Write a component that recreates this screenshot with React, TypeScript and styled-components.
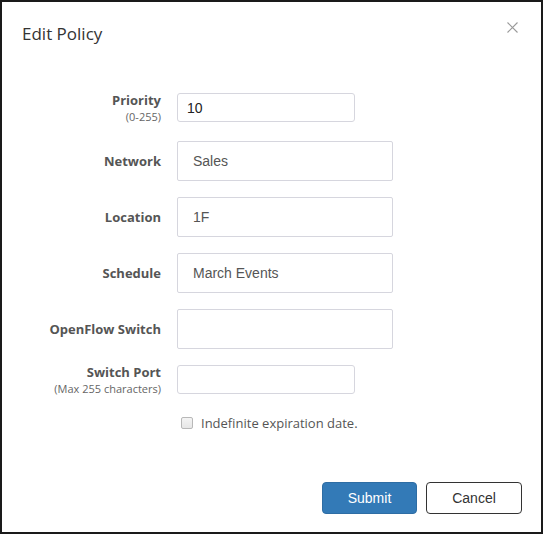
import React from 'react';
import styled, { createGlobalStyle } from 'styled-components';

const GlobalStyle = createGlobalStyle`
  html, body {
    margin: 0;
    padding: 0;
    background: #fff;
  }
  * {
    box-sizing: border-box;
  }
`;

const Dialog = styled.div`
  width: 543px;
  height: 534px;
  border: 2px solid #1a1a1a;
  background: #fff;
  display: flex;
  flex-direction: column;
  font-family: 'Open Sans', 'Liberation Sans', sans-serif;
`;

const Header = styled.header`
  display: flex;
  justify-content: space-between;
  align-items: flex-start;
  padding: 20px 22px 0 20px;
  height: 91px;
`;

const Title = styled.h4`
  margin: 0;
  font-size: 17px;
  font-weight: 400;
  line-height: 24px;
  color: #333;
`;

const CloseButton = styled.button`
  border: 0;
  background: none;
  padding: 0;
  width: 12px;
  height: 12px;
  cursor: pointer;
  display: flex;
`;

const Form = styled.form`
  display: flex;
  flex-direction: column;
  gap: 16px;
  flex: 1;
`;

const Row = styled.div<{ $top?: boolean; $extra?: number }>`
  display: grid;
  grid-template-columns: 159px 1fr;
  column-gap: 16px;
  align-items: ${({ $top }) => ($top ? 'start' : 'center')};
  margin-bottom: ${({ $extra }) => $extra ?? 0}px;
`;

const LabelBlock = styled.label<{ $twoLine?: boolean }>`
  display: flex;
  flex-direction: column;
  align-items: flex-end;
  text-align: right;
  margin-top: ${({ $twoLine }) => ($twoLine ? '-1px' : '0')};
`;

const LabelText = styled.span`
  font-size: 13px;
  font-weight: 700;
  color: #555;
  line-height: 17px;
`;

const Hint = styled.span`
  font-size: 11px;
  color: #666;
  line-height: 15px;
`;

const Input = styled.input<{ $size: 'sm' | 'lg' }>`
  display: block;
  width: ${({ $size }) => ($size === 'sm' ? '178px' : '216px')};
  height: ${({ $size }) => ($size === 'sm' ? '29px' : '40px')};
  padding: 0 ${({ $size }) => ($size === 'sm' ? '9px' : '15px')};
  border: 1px solid #d6d6de;
  border-radius: ${({ $size }) => ($size === 'sm' ? '3px' : '2px')};
  font-family: 'Liberation Sans', Arial, sans-serif;
  font-size: 14px;
  color: ${({ $size }) => ($size === 'sm' ? '#222' : '#555')};
  background: #fff;
  outline: none;
`;

const CheckRow = styled.div`
  display: flex;
  align-items: center;
  gap: 8px;
  margin: 2px 0 0 179px;
`;

const CheckBox = styled.span`
  width: 12px;
  height: 12px;
  border: 1px solid #b8b8b8;
  border-radius: 2px;
  background: linear-gradient(#f4f4f4, #e6e6e6);
`;

const CheckLabel = styled.span`
  font-size: 13px;
  color: #555;
  line-height: 18px;
`;

const Footer = styled.footer`
  display: flex;
  justify-content: flex-end;
  gap: 9px;
  padding: 0 19px 18px 0;
`;

const Button = styled.button<{ $primary?: boolean }>`
  height: 32px;
  width: ${({ $primary }) => ($primary ? '95px' : '96px')};
  border-radius: 4px;
  border: 1px solid ${({ $primary }) => ($primary ? '#2e6da4' : '#333')};
  background: ${({ $primary }) => ($primary ? '#337ab7' : '#fff')};
  color: ${({ $primary }) => ($primary ? '#fff' : '#333')};
  font-family: 'Liberation Sans', Arial, sans-serif;
  font-size: 14px;
  cursor: pointer;
`;

const fields = [
  { label: 'Network', value: 'Sales' },
  { label: 'Location', value: '1F' },
  { label: 'Schedule', value: 'March Events' },
  { label: 'OpenFlow Switch', value: '' },
];

export default function App() {
  return (
    <>
      <GlobalStyle />
      <Dialog>
        <Header>
          <Title>Edit Policy</Title>
          <CloseButton aria-label="Close">
            <svg width="11" height="11" viewBox="0 0 11 11">
              <path d="M0.5 0.5L10.5 10.5M10.5 0.5L0.5 10.5" stroke="#9a9a9a" strokeWidth="1.1" />
            </svg>
          </CloseButton>
        </Header>
        <Form onSubmit={(e) => e.preventDefault()}>
          <Row $top $extra={1}>
            <LabelBlock $twoLine>
              <LabelText>Priority</LabelText>
              <Hint>(0-255)</Hint>
            </LabelBlock>
            <Input $size="sm" defaultValue="10" />
          </Row>
          {fields.map((f) => (
            <Row key={f.label}>
              <LabelBlock>
                <LabelText>{f.label}</LabelText>
              </LabelBlock>
              <Input $size="lg" defaultValue={f.value} />
            </Row>
          ))}
          <Row $top>
            <LabelBlock $twoLine>
              <LabelText>Switch Port</LabelText>
              <Hint>(Max 255 characters)</Hint>
            </LabelBlock>
            <Input $size="sm" defaultValue="" />
          </Row>
          <CheckRow>
            <CheckBox />
            <CheckLabel>Indefinite expiration date.</CheckLabel>
          </CheckRow>
        </Form>
        <Footer>
          <Button $primary type="submit">Submit</Button>
          <Button type="button">Cancel</Button>
        </Footer>
      </Dialog>
    </>
  );
}
